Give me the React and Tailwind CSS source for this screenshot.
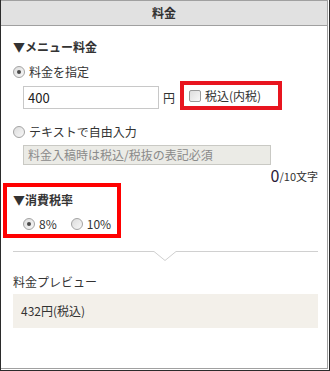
import React from "react";

const font = { fontFamily: '"Noto Sans CJK JP", "Noto Sans", sans-serif' };

const Radio = ({ checked }) => (
  <span className="relative inline-flex w-3 h-3 shrink-0 items-center justify-center rounded-full border border-[#a3a3a3] bg-gradient-to-br from-[#dcdcdc] to-[#f8f8f8]">
    {checked && <span className="w-[4px] h-[4px] rounded-full bg-[#4a4a4a]" />}
  </span>
);

const Checkbox = () => (
  <span className="inline-block w-3 h-3 shrink-0 rounded-[2px] border border-[#9a9a9a] bg-gradient-to-br from-[#dedede] to-[#f8f8f8]" />
);

const App = () => {
  return (
    <div
      className="w-[330px] h-[371px] bg-white border-l border-r border-b border-[#2b2b2b] pr-[1px] pb-[1px] text-[12px] leading-[16px] text-[#333]"
      style={font}
    >
      <div className="h-full border-t border-r border-b border-[#a0a0a0] flex flex-col">
        {/* header */}
        <div className="h-[25px] shrink-0 bg-[#e1e1e1] border-b border-[#a0a0a0] flex items-center justify-center font-bold">
          料金
        </div>

        <div className="pl-3 pr-[9px] flex flex-col">
          {/* メニュー料金 */}
          <div className="mt-[13px] font-bold">▼メニュー料金</div>

          <label className="mt-[9px] flex items-center gap-1 h-4">
            <Radio checked />
            <span>料金を指定</span>
          </label>

          <div className="mt-[1px] flex items-start pl-[10px]">
            <div className="mt-[5px] w-[136px] h-[23px] border border-[#c8c8c8] flex items-center pl-[4px] text-[13px] text-[#222]">
              400
            </div>
            <span className="mt-[9px] ml-[4px]">円</span>
            <div className="ml-[5px] w-[102px] h-[29px] border-4 border-[#e8151f] flex items-center gap-1 pl-[5px]">
              <Checkbox />
              <span>税込(内税)</span>
            </div>
          </div>

          <label className="mt-[14px] flex items-center gap-1 h-4">
            <Radio />
            <span>テキストで自由入力</span>
          </label>

          <div className="mt-[5px] ml-[10px] w-[248px] h-[20px] border border-[#c9c9c4] bg-[#ebebe6] flex items-center pl-[4px] text-[#8a8a8a]">
            料金入稿時は税込/税抜の表記必須
          </div>

          <div className="mt-[4px] h-[14px] flex items-end justify-end leading-[14px]">
            <span className="text-[16px] text-[#2a1838] leading-[16px]">0</span>
            <span className="text-[11px]">/10文字</span>
          </div>

          {/* 消費税率 */}
          <div className="-ml-[10px] w-[118px] border-4 border-[#ff0000] pl-[6px] pt-[5px] pb-[2px]">
            <div className="font-bold">▼消費税率</div>
            <div className="mt-[8px] flex items-center h-4 pl-[10px]">
              <Radio checked />
              <span className="ml-1">8%</span>
              <span className="ml-[14px]" />
              <Radio />
              <span className="ml-1">10%</span>
            </div>
          </div>

          {/* divider */}
          <div className="relative mt-[13px] h-[1px] bg-[#d0d0d0]">
            <svg
              className="absolute left-[141px] -top-[1px]"
              width="22"
              height="12"
              viewBox="0 0 22 12"
            >
              <rect x="0" y="0" width="22" height="3" fill="#fff" />
              <polyline points="0,1.5 11,10.5 22,1.5" fill="none" stroke="#d0d0d0" strokeWidth="1" />
            </svg>
          </div>

          <div className="mt-[22px]">料金プレビュー</div>

          <div className="mt-[4px] h-[34px] bg-[#f3f0ea] flex items-center pl-2">
            432円(税込)
          </div>
        </div>
      </div>
    </div>
  );
};

export default App;
